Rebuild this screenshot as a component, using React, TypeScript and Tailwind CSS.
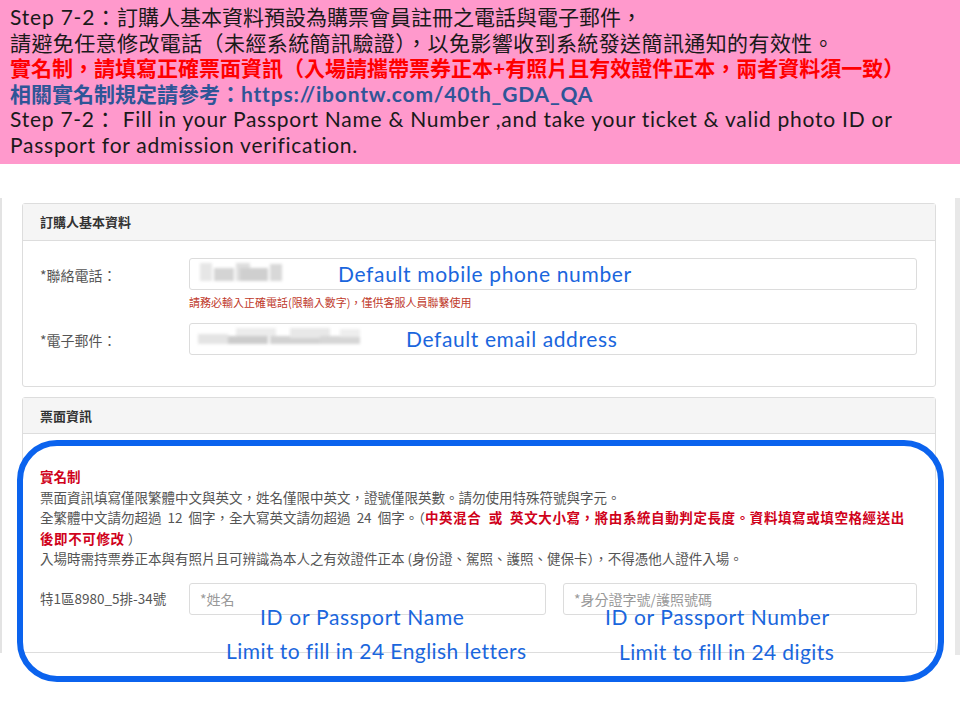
import React from "react";

const cjk = '"Noto Sans CJK TC", sans-serif';
const banner = 'Lato, "Noto Sans CJK TC", sans-serif';
const anno = 'Lato, "Open Sans", sans-serif';

function Blur({ blocks }: { blocks: [number, number, number, number, string][] }) {
  return (
    <div className="absolute inset-0 blur-[1.5px]">
      {blocks.map(([l, t, w, h, c], i) => (
        <div key={i} className="absolute" style={{ left: l, top: t, width: w, height: h, background: c }} />
      ))}
    </div>
  );
}

export default function App() {
  return (
    <div className="relative w-[960px] h-[720px] bg-white overflow-hidden" style={{ fontFamily: cjk }}>
      {/* Banner */}
      <div
        className="h-[164px] bg-[#ff99cc] pl-[10px] pt-[4px] text-[21px] leading-[25.5px] text-[#1a1a1a]"
        style={{ fontFamily: banner }}
      >
        <div>
          <span className="tracking-[0.8px]">Step 7-2：</span>訂購人基本資料預設為購票會員註冊之電話與電子郵件，
        </div>
        <div className="tracking-[0.4px]">請避免任意修改電話（未經系統簡訊驗證），以免影響收到系統發送簡訊通知的有效性。</div>
        <div className="font-bold text-[#ff0000]">實名制，請填寫正確票面資訊（入場請攜帶票券正本+有照片且有效證件正本，兩者資料須一致）</div>
        <div className="font-bold text-[#2f5597]">
          相關實名制規定請參考：<span className="tracking-[0.8px]">https://ibontw.com/40th_GDA_QA</span>
        </div>
        <div className="tracking-[0.75px]">Step 7-2： Fill in your Passport Name &amp; Number ,and take your ticket &amp; valid photo ID or</div>
        <div className="tracking-[0.75px]">Passport for admission verification.</div>
      </div>

      {/* Screenshot area */}
      <div className="mt-[34px] flex">
        <div className="w-[2px] h-[455px] bg-[#e3e3e3]" />
        <div className="w-[953px] pl-[20px] pt-[5px]">
          {/* Card 1 */}
          <div className="w-[914px] border border-[#dddddd] rounded-[3px]">
            <div className="h-[37px] bg-[#f5f5f5] border-b border-[#dddddd] pl-[17px] flex items-center text-[13px] font-bold text-[#333]">
              訂購人基本資料
            </div>
            <div className="pl-[17px] pr-[18px] pt-[17px] pb-[31px] text-[14px] text-[#555]">
              <div className="flex items-center">
                <div className="w-[149px] pt-[2px]">*聯絡電話：</div>
                <div className="relative flex-1 h-[32px] border border-[#dcdcdc] rounded-[3px]">
                  <Blur
                    blocks={[
                      [10, 4, 12, 18, "#e6e6e6"],
                      [24, 9, 20, 13, "#d4d4d4"],
                      [46, 4, 14, 18, "#dedede"],
                      [50, 9, 28, 13, "#cfcfcf"],
                      [80, 5, 12, 17, "#d8d8d8"],
                    ]}
                  />
                  <span
                    className="absolute left-[148px] top-[-1px] text-[21px] tracking-[0.65px] text-[#1a66dd]"
                    style={{ fontFamily: anno }}
                  >
                    Default mobile phone number
                  </span>
                </div>
              </div>
              <div className="ml-[149px] mt-[5px] text-[11px] leading-[14px] text-[#c0392b]">
                請務必輸入正確電話(限輸入數字)，僅供客服人員聯繫使用
              </div>
              <div className="flex items-center mt-[14px]">
                <div className="w-[149px] pt-[2px]">*電子郵件：</div>
                <div className="relative flex-1 h-[32px] border border-[#dcdcdc] rounded-[3px]">
                  <Blur
                    blocks={[
                      [8, 10, 30, 10, "#e4e4e4"],
                      [38, 12, 40, 8, "#cccccc"],
                      [46, 4, 40, 8, "#ececec"],
                      [80, 12, 50, 8, "#d2d2d2"],
                      [100, 4, 40, 10, "#e8e8e8"],
                      [130, 12, 40, 8, "#d6d6d6"],
                      [150, 5, 20, 8, "#eeeeee"],
                    ]}
                  />
                  <span
                    className="absolute left-[216px] top-[-1px] text-[21px] tracking-[0.6px] text-[#1a66dd]"
                    style={{ fontFamily: anno }}
                  >
                    Default email address
                  </span>
                </div>
              </div>
            </div>
          </div>

          {/* Card 2 */}
          <div className="mt-[10px] w-[914px] border border-[#dddddd] rounded-[3px]">
            <div className="h-[36px] bg-[#f5f5f5] border-b border-[#dddddd] pl-[17px] flex items-center text-[13px] font-bold text-[#333]">
              票面資訊
            </div>
            <div className="pl-[17px] pr-[18px] pt-[32px] pb-[37px] text-[13.5px] leading-[20.5px] text-[#555]">
              <div className="font-bold text-[#d0021b]">實名制</div>
              <div>票面資訊填寫僅限繁體中文與英文，姓名僅限中英文，證號僅限英數。請勿使用特殊符號與字元。</div>
              <div>
                全繁體中文請勿超過&nbsp; 12&nbsp; 個字，全大寫英文請勿超過&nbsp; 24&nbsp; 個字。（ 
                <span className="font-bold text-[#d0021b] tracking-[0.6px]">
                  中英混合&nbsp; 或&nbsp; 英文大小寫，將由系統自動判定長度。資料填寫或填空格經送出
                  <br />
                  後即不可修改
                </span>
                &nbsp;）
              </div>
              <div>入場時需持票券正本與有照片且可辨識為本人之有效證件正本 (身份證、駕照、護照、健保卡），不得憑他人證件入場。</div>
              <div className="flex items-center mt-[14px]">
                <div className="w-[149px] text-[13.5px]">特1區8980_5排-34號</div>
                <div className="w-[357px] h-[32px] border border-[#dcdcdc] rounded-[3px] pl-[10px] flex items-center text-[14px] leading-none text-[#999]">
                  *姓名
                </div>
                <div className="ml-[17px] flex-1 h-[32px] border border-[#dcdcdc] rounded-[3px] pl-[10px] flex items-center text-[14px] leading-none text-[#999]">
                  *身分證字號/護照號碼
                </div>
              </div>
            </div>
          </div>
        </div>
        <div className="w-[5px] h-[457px] bg-[#e8e8e8]" />
      </div>

      {/* Annotation overlay */}
      <div className="absolute left-[17px] top-[440px] w-[927px] h-[242px] border-[6px] border-[#0b63ee] rounded-[40px] pointer-events-none" />
      <div
        className="absolute inset-0 pointer-events-none text-[21px] leading-none text-[#1a66dd]"
        style={{ fontFamily: anno }}
      >
        <span className="absolute left-[260px] top-[606px] tracking-[0.7px]">ID or Passport Name</span>
        <span className="absolute left-[226px] top-[640px] tracking-[0.45px]">Limit to fill in 24 English letters</span>
        <span className="absolute left-[605px] top-[606px] tracking-[0.6px]">ID or Passport Number</span>
        <span className="absolute left-[619px] top-[641px] tracking-[0.4px]">Limit to fill in 24 digits</span>
      </div>
    </div>
  );
}
